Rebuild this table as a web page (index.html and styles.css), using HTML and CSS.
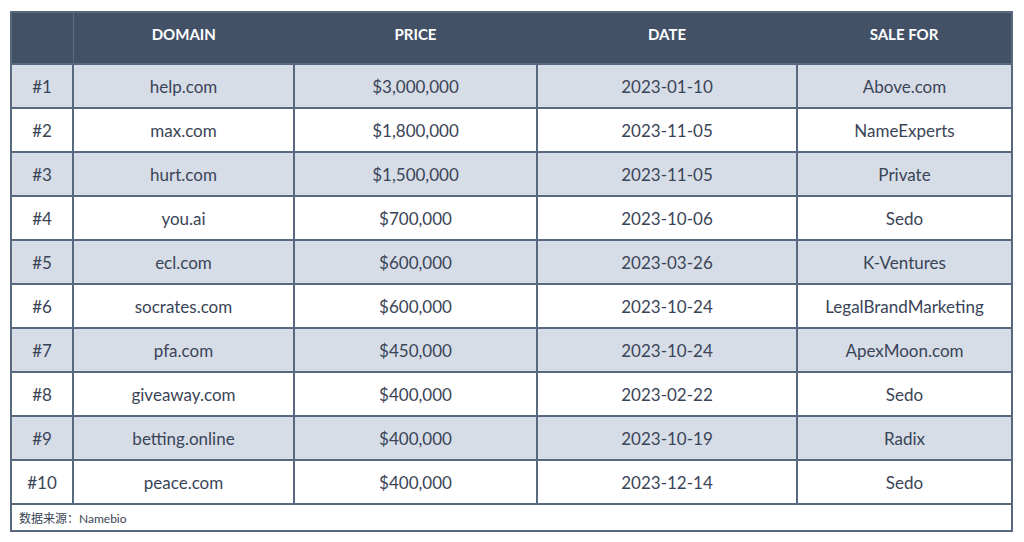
FILE: index.html
```html
<!DOCTYPE html>
<html>
<head>
<meta charset="utf-8">
<link rel="stylesheet" href="styles.css">
</head>
<body>
<table class="sales">
  <colgroup>
    <col class="c-rank"><col class="c-domain"><col class="c-price"><col class="c-date"><col class="c-sale">
  </colgroup>
  <thead>
    <tr><th class="rank-h"></th><th>DOMAIN</th><th>PRICE</th><th>DATE</th><th>SALE FOR</th></tr>
  </thead>
  <tbody>
    <tr class="alt"><td>#1</td><td>help.com</td><td>$3,000,000</td><td>2023-01-10</td><td>Above.com</td></tr>
    <tr><td>#2</td><td>max.com</td><td>$1,800,000</td><td>2023-11-05</td><td>NameExperts</td></tr>
    <tr class="alt"><td>#3</td><td>hurt.com</td><td>$1,500,000</td><td>2023-11-05</td><td>Private</td></tr>
    <tr><td>#4</td><td>you.ai</td><td>$700,000</td><td>2023-10-06</td><td>Sedo</td></tr>
    <tr class="alt"><td>#5</td><td>ecl.com</td><td>$600,000</td><td>2023-03-26</td><td>K-Ventures</td></tr>
    <tr><td>#6</td><td>socrates.com</td><td>$600,000</td><td>2023-10-24</td><td>LegalBrandMarketing</td></tr>
    <tr class="alt"><td>#7</td><td>pfa.com</td><td>$450,000</td><td>2023-10-24</td><td>ApexMoon.com</td></tr>
    <tr><td>#8</td><td>giveaway.com</td><td>$400,000</td><td>2023-02-22</td><td>Sedo</td></tr>
    <tr class="alt"><td>#9</td><td>betting.online</td><td>$400,000</td><td>2023-10-19</td><td>Radix</td></tr>
    <tr><td>#10</td><td>peace.com</td><td>$400,000</td><td>2023-12-14</td><td>Sedo</td></tr>
  </tbody>
  <tfoot>
    <tr><td colspan="5" class="source">数据来源：Namebio</td></tr>
  </tfoot>
</table>
</body>
</html>
```
FILE: styles.css
```css
html, body {
  margin: 0;
  padding: 0;
  background: #ffffff;
}
body {
  padding: 11px 0 0 10px;
  font-family: Lato, "Noto Sans CJK SC", sans-serif;
}
.sales {
  border-collapse: collapse;
  table-layout: fixed;
  width: 1001px;
  border: 2px solid #58687f;
}
.c-rank { width: 62px; }
.c-domain { width: 221px; }
.c-price { width: 243px; }
.c-date { width: 260px; }
.c-sale { width: 215px; }
.sales th {
  background: #435167;
  color: #ffffff;
  font-weight: 700;
  font-size: 15px;
  height: 42px;
  padding: 0 0 8px;
  text-align: center;
  border: none;
  border-bottom: 2px solid #58687f;
}
.sales th.rank-h {
  border-right: 1px solid #5d6d84;
}
.sales td {
  height: 42px;
  padding: 0;
  text-align: center;
  font-size: 17px;
  color: #3a4457;
  border: 2px solid #58687f;
}
.sales tr.alt td {
  background: #d6dde7;
}
.sales td.source {
  height: 25px;
  text-align: left;
  font-size: 12px;
  padding-left: 7px;
  color: #3a4457;
}
```
